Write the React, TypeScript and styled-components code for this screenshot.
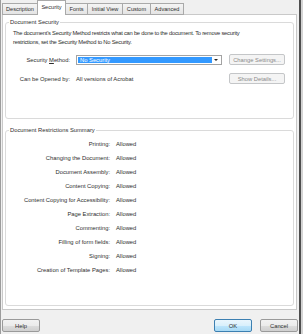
import styled, { createGlobalStyle } from "styled-components";

const GlobalStyle = createGlobalStyle`
  html, body {
    margin: 0;
    padding: 0;
    background: #d4d4d4;
  }
  body {
    font-family: "Liberation Sans", Arial, sans-serif;
  }
  * {
    box-sizing: border-box;
  }
`;

const Window = styled.div`
  width: 301px;
  height: 334px;
  background: #f0f0f0;
  border-left: 1px solid #9c9c9c;
  border-right: 2px solid #4e4e4e;
  display: flex;
  flex-direction: column;
  font-size: 5.8px;
  color: #2e2e2e;
`;

const TabBar = styled.div`
  display: flex;
  align-items: flex-end;
  height: 15px;
  padding-left: 1px;
`;

const Tab = styled.div<{ $active?: boolean; $w: number }>`
  position: relative;
  z-index: ${(p) => (p.$active ? 1 : 0)};
  width: ${(p) => p.$w}px;
  height: ${(p) => (p.$active ? 15 : 12)}px;
  margin-right: -1px;
  border: 1px solid #a9a9a9;
  border-bottom: ${(p) => (p.$active ? "none" : "1px solid #a9a9a9")};
  background: ${(p) =>
    p.$active ? "#fff" : "linear-gradient(#f4f4f4, #e4e4e4)"};
  display: flex;
  align-items: center;
  justify-content: center;
  white-space: nowrap;
  font-size: 5.6px;
  padding-bottom: ${(p) => (p.$active ? 2 : 0)}px;
`;

const Panel = styled.div`
  flex: 1;
  margin: -1px 2px 0 1px;
  border: 1px solid #c9c9c9;
  background: #fff;
  display: flex;
  flex-direction: column;
  padding: 3px 2px 3px 2px;
`;

const Group = styled.fieldset<{ $grow?: boolean; $gap?: number }>`
  margin: ${(p) => p.$gap ?? 0}px 0 0 0;
  padding: 0 7px ${(p) => (p.$grow ? 0 : 34)}px 7px;
  border: 1px solid #dadada;
  border-radius: 3px;
  min-width: 0;
  flex: ${(p) => (p.$grow ? 1 : "none")};
`;

const Legend = styled.legend`
  padding: 0 1px;
  margin-left: -4px;
  line-height: 8px;
`;

const Description = styled.p`
  margin: 3px 0 0;
  line-height: 9px;
  white-space: nowrap;
  letter-spacing: -0.24px;
`;

const FormGrid = styled.div`
  display: grid;
  grid-template-columns: 57px 146px 57px;
  grid-auto-rows: 11px;
  column-gap: 6px;
  row-gap: 8px;
  align-items: center;
  margin-top: 7px;
`;

const Label = styled.span`
  text-align: right;
  white-space: nowrap;
`;

const Select = styled.div`
  height: 10px;
  border: 1px solid #a3a3a3;
  background: #fff;
  display: flex;
  padding: 1px;
`;

const SelectedValue = styled.div`
  flex: 1;
  background: #3399ff;
  color: #fff;
  padding-left: 2px;
  line-height: 6px;
`;

const Arrow = styled.div`
  width: 8px;
  display: flex;
  align-items: center;
  justify-content: center;
  &::after {
    content: "";
    border-left: 2px solid transparent;
    border-right: 2px solid transparent;
    border-top: 2px solid #222;
  }
`;

const Button = styled.div<{ $variant?: "default" | "primary" | "disabled"; $w?: number }>`
  width: ${(p) => (p.$w ? `${p.$w}px` : "auto")};
  height: ${(p) => (p.$variant === "disabled" ? 11 : 13)}px;
  margin-left: ${(p) => (p.$variant === "disabled" ? 1 : 0)}px;
  border: 1px solid
    ${(p) =>
      p.$variant === "primary"
        ? "#3c7fb1"
        : p.$variant === "disabled"
        ? "#c4c6c8"
        : "#9a9a9a"};
  border-radius: 2px;
  background: ${(p) =>
    p.$variant === "primary"
      ? "linear-gradient(#eaf6fd, #d9f0fc 50%, #bee6fd 51%, #a7d9f5)"
      : p.$variant === "disabled"
      ? "#f4f4f4"
      : "linear-gradient(#f2f2f2, #ebebeb 50%, #dddddd 51%, #cfcfcf)"};
  color: ${(p) => (p.$variant === "disabled" ? "#8a8a8a" : "#2e2e2e")};
  display: flex;
  align-items: center;
  justify-content: center;
  white-space: nowrap;
`;

const SummaryGrid = styled.div`
  display: grid;
  grid-template-columns: 97px auto;
  grid-auto-rows: 14px;
  column-gap: 6px;
  align-items: center;
  margin-top: 3px;
`;

const Footer = styled.div`
  height: 24px;
  display: flex;
  align-items: flex-start;
  gap: 8px;
  padding: 9px 1px 0 1px;
`;

const Spacer = styled.div`
  flex: 1;
`;

const tabs = [
  { name: "Description", w: 36 },
  { name: "Security", w: 29 },
  { name: "Fonts", w: 23 },
  { name: "Initial View", w: 36 },
  { name: "Custom", w: 29 },
  { name: "Advanced", w: 34 },
];

const restrictions = [
  "Printing",
  "Changing the Document",
  "Document Assembly",
  "Content Copying",
  "Content Copying for Accessibility",
  "Page Extraction",
  "Commenting",
  "Filling of form fields",
  "Signing",
  "Creation of Template Pages",
];

export default function App() {
  return (
    <>
      <GlobalStyle />
      <Window>
        <TabBar>
          {tabs.map((t) => (
            <Tab key={t.name} $w={t.w} $active={t.name === "Security"}>
              {t.name}
            </Tab>
          ))}
        </TabBar>

        <Panel>
          <Group>
            <Legend>Document Security</Legend>
            <Description>
              The document's Security Method restricts what can be done to the
              document. To remove security
              <br />
              restrictions, set the Security Method to No Security.
            </Description>
            <FormGrid>
              <Label>
                Security <u>M</u>ethod:
              </Label>
              <Select>
                <SelectedValue>No Security</SelectedValue>
                <Arrow />
              </Select>
              <Button $variant="disabled">Change Settings...</Button>
              <Label>Can be Opened by:</Label>
              <span>All versions of Acrobat</span>
              <Button $variant="disabled">Show Details...</Button>
            </FormGrid>
          </Group>

          <Group $grow $gap={7}>
            <Legend>Document Restrictions Summary</Legend>
            <SummaryGrid>
              {restrictions.flatMap((r) => [
                <Label key={r}>{r}:</Label>,
                <span key={r + "-v"}>Allowed</span>,
              ])}
            </SummaryGrid>
          </Group>
        </Panel>

        <Footer>
          <Button $w={38}>Help</Button>
          <Spacer />
          <Button $w={38} $variant="primary">
            OK
          </Button>
          <Button $w={38}>Cancel</Button>
        </Footer>
      </Window>
    </>
  );
}
